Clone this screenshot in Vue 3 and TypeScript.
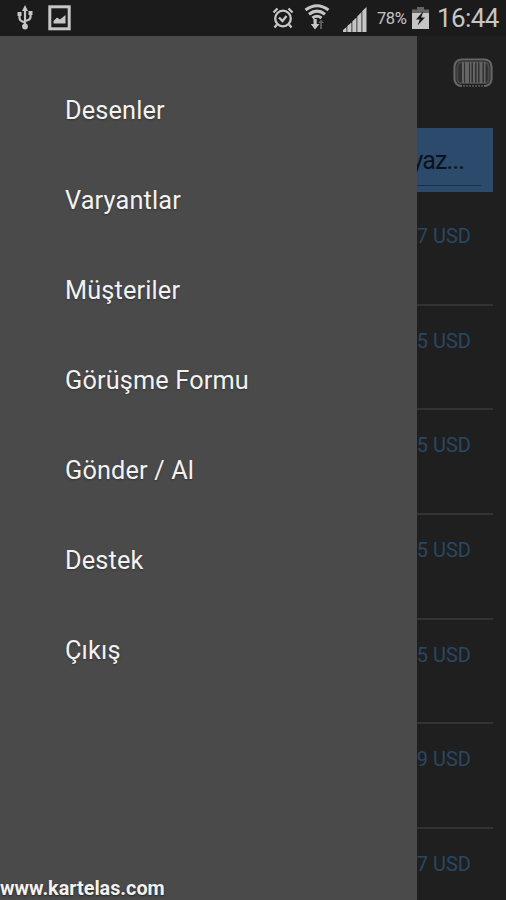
<script setup lang="ts">
const menu: string[] = ['Desenler', 'Varyantlar', 'Müşteriler', 'Görüşme Formu', 'Gönder / Al', 'Destek', 'Çıkış']
const prices: string[] = ['7 USD', '5 USD', '5 USD', '5 USD', '5 USD', '9 USD', '7 USD']
const bars = [
  { x: 9, w: 2 }, { x: 12, w: 4 }, { x: 17, w: 1.5 }, { x: 20, w: 2 },
  { x: 23.5, w: 1.5 }, { x: 26.5, w: 3 }, { x: 31, w: 1.5 },
]
</script>

<template>
  <div class="screen">
    <header class="status">
      <svg class="usb" width="18" height="26" viewBox="0 0 18 26">
        <g fill="none" stroke="currentColor" stroke-width="2.200">
          <path d="M9 4V22M3.500 9V13Q3.500 16 9 17.500M14.500 8V12Q14.500 15 9 16" />
        </g>
        <path d="M9 0L12 6H6ZM1.500 7h4v4h-4ZM12.500 6h4v4h-4Z" fill="currentColor" />
        <circle cx="9" cy="21.500" r="2.900" fill="currentColor" />
      </svg>
      <svg class="photo" width="23" height="26" viewBox="0 0 23 26">
        <rect x="1.800" y="1.800" width="19.400" height="22" fill="none" stroke="currentColor" stroke-width="3" />
        <path d="M5.500 18.500V16L9 12.500L12 14.500L17.500 10V18.500Z" fill="currentColor" />
      </svg>
      <span class="grow"></span>
      <svg class="alarm" width="22" height="22" viewBox="0 0 22 22" fill="none" stroke="currentColor" stroke-width="2.300">
        <circle cx="11" cy="11.500" r="7.800" />
        <path d="M7 10.500L10.500 14L14.500 9M1.500 5.500L5.500 1.500M20.500 5.500L16.500 1.500M5 17.500L2.500 20.500M17 17.500L19.500 20.500" />
      </svg>
      <svg class="wifi" width="26" height="27" viewBox="0 0 26 27">
        <g fill="none" stroke="currentColor" stroke-width="3">
          <path d="M1.500 6Q13 -2.500 24.500 6M5 10.200Q13 4 21 10.200M8.500 14Q13 10.500 17.500 14" />
        </g>
        <path d="M9.500 15h3.200v5h2.800L11 25.500L6.800 20h2.700Z" fill="currentColor" />
        <path d="M17 15.500L20 19H18v6h-2v-6h-2Z" fill="#5c5c5c" />
      </svg>
      <svg class="signal" width="24" height="25" viewBox="0 0 24 25" fill="currentColor">
        <path d="M0 25V23L3.500 20V25ZM4.300 25V19L8.500 15.500V25ZM9.300 25V14.500L13.500 10.500V25ZM14.300 25V9.500L18.500 5V25ZM19.300 25V4L23.500 0V25Z" />
      </svg>
      <span class="percent">78%</span>
      <svg class="battery" width="17" height="22" viewBox="0 0 17 22">
        <path d="M5 0H12V2.500H17V8H0V2.500H5Z" fill="#666" />
        <path d="M0 6H17V22H0Z" fill="currentColor" />
        <path d="M11.500 4L4 12.500H7.800L5.500 18.500L13 10.500H9.200Z" fill="#171717" />
      </svg>
      <time class="clock">16:44</time>
    </header>
    <div class="body">
      <nav class="drawer">
        <ul class="menu">
          <li v-for="item in menu" :key="item">{{ item }}</li>
        </ul>
        <footer class="site">www.kartelas.com</footer>
      </nav>
      <main class="content">
        <div class="toolbar">
          <svg width="40" height="30" viewBox="0 0 40 30">
            <rect x="1.500" y="1.500" width="37" height="26.500" rx="7" fill="none" stroke="#666" stroke-width="2.200" />
            <rect x="4.300" y="4.300" width="31.400" height="21" rx="4" fill="#303030" stroke="#484848" stroke-width="2" />
            <path d="M9 28.500H31" stroke="#1f1f1f" stroke-width="4" />
            <path d="M10 28H30" stroke="#4c4c4c" stroke-width="2" stroke-dasharray="2 1" />
            <rect v-for="bar in bars" :key="bar.x" :x="bar.x" y="4" :width="bar.w" height="21" fill="#646464" />
          </svg>
        </div>
        <div class="search"><span class="query">yaz...</span></div>
        <ul class="prices">
          <li v-for="(price, i) in prices" :key="i">{{ price }}</li>
        </ul>
      </main>
    </div>
  </div>
</template>

<style>
body { margin: 0; background: #1f1f1f; }
</style>

<style scoped>
.screen { width: 506px; height: 900px; display: flex; flex-direction: column; overflow: hidden; background: #1f1f1f; font-family: Roboto, "Noto Sans", sans-serif; }
.status { flex: none; height: 36px; display: flex; align-items: flex-start; box-sizing: border-box; padding-left: 16px; background: #1b1b1b; color: #c6c6c6; }
.status svg { flex: none; }
.usb { margin-top: 5px; }
.photo { margin: 5px 0 0 14px; }
.grow { flex: 1; }
.alarm { margin-top: 7px; }
.wifi { margin: 4px 0 0 10px; }
.signal { margin: 7px 0 0 13px; }
.percent { width: 30px; margin: 9px 0 0 10px; font-size: 16.500px; line-height: 20px; letter-spacing: -0.4px; }
.battery { margin: 7px 0 0 5px; }
.clock { width: 62px; margin: 2px 7px 0 8px; font-size: 26px; line-height: 32px; letter-spacing: -0.6px; white-space: nowrap; }
.body { flex: 1; display: flex; min-height: 0; }
.drawer { flex: none; width: 417px; display: flex; flex-direction: column; justify-content: space-between; background: #4a4a4a; color: #f2f2f2; }
ul { list-style: none; margin: 0; padding: 0; }
.menu { padding: 30px 0 0 65px; }
.menu li { height: 90px; font-size: 25.300px; line-height: 90px; letter-spacing: 0.150px; text-shadow: 0 1px 2px #333; }
.site { font-size: 19.800px; line-height: 23px; font-weight: 700; text-shadow: 0 1px 2px #222; }
.content { flex: 1; min-width: 0; overflow: hidden; padding-right: 13px; box-sizing: border-box; }
.toolbar { height: 92px; display: flex; justify-content: flex-end; padding-top: 22px; box-sizing: border-box; }
.search { height: 64px; display: flex; box-sizing: border-box; padding: 8px 12px 6px 0; background: #2c4a6b; color: #0c1219; }
.query { flex: 1; min-width: 0; display: flex; justify-content: flex-end; padding-right: 17px; border-bottom: 1px solid #1b3049; font-size: 25px; line-height: 50px; letter-spacing: -0.8px; }
.prices { margin-top: 9px; }
.prices li { height: 104.700px; display: flex; justify-content: flex-end; box-sizing: border-box; padding: 4px 22px 0 0; border-bottom: 2px solid #333; color: #294762; font-size: 20px; line-height: 63px; white-space: nowrap; }
</style>
